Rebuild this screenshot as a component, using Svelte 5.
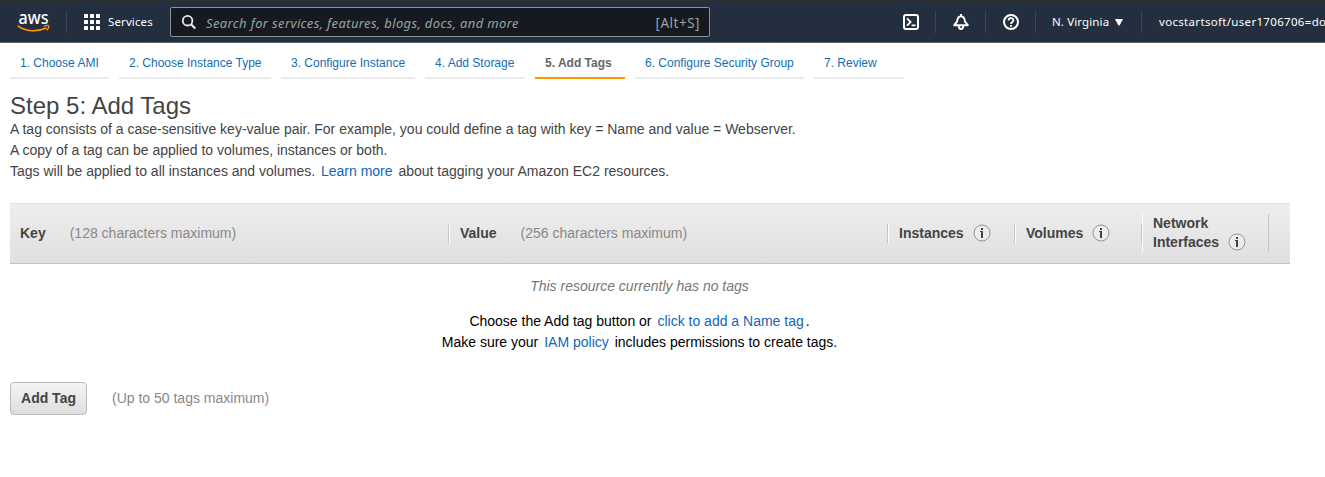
<script>
  const steps = [
    { label: '1. Choose AMI', width: 99 },
    { label: '2. Choose Instance Type', width: 152 },
    { label: '3. Configure Instance', width: 134 },
    { label: '4. Add Storage', width: 100 },
    { label: '5. Add Tags', width: 90, active: true },
    { label: '6. Configure Security Group', width: 169 },
    { label: '7. Review', width: 90 }
  ];
  const dots = [0, 6, 12];
</script>

{#snippet info()}
  <svg class="info" width="18" height="18" viewBox="0 0 18 18" aria-hidden="true">
    <circle cx="9" cy="9" r="8" fill="#ececec" stroke="#949494" />
    <path d="M8 4h2v2H8zM7 7h3v7H8V8H7z" fill="#444" />
  </svg>
{/snippet}

<header>
  <div class="logo">
    <svg width="34" height="24" viewBox="0 0 34 24">
      <text x="1.500" y="12.500" textLength="30" lengthAdjust="spacingAndGlyphs">aws</text>
      <path d="M1.200 15.200C9 20.800 20 21.200 29 17" fill="none" stroke="#f90" stroke-width="1.600" stroke-linecap="round" />
      <path d="M27 15.200c2-.8 4-.9 4.600-.4.4.7-.4 3-1.600 4.300" fill="none" stroke="#f90" stroke-width="1.200" stroke-linecap="round" />
    </svg>
  </div>
  <div class="services">
    <svg width="16" height="16" viewBox="0 0 16 16" fill="#fff">
      {#each dots as y}
        {#each dots as x}
          <rect {x} {y} width="4" height="4" rx=".6" />
        {/each}
      {/each}
    </svg>
    <span>Services</span>
  </div>
  <div class="search">
    <svg width="16" height="16" viewBox="0 0 16 16" fill="none" stroke="#eaeded" stroke-width="1.8">
      <circle cx="6.6" cy="6.7" r="4.8" />
      <path d="M10 10.200l4.3 4.3" stroke-width="2.1" />
    </svg>
    <em>Search for services, features, blogs, docs, and more</em>
    <kbd>[Alt+S]</kbd>
  </div>
  <div class="tool">
    <svg width="16" height="16" viewBox="0 0 16 16" fill="none" stroke="#fff" stroke-width="2">
      <rect x="1" y="1" width="14" height="14" rx="2" />
      <path d="M4 4.3L7.6 8 4 11.7M8.6 11.3h4" stroke-width="1.8" />
    </svg>
  </div>
  <div class="tool">
    <svg width="16" height="16" viewBox="0 0 16 16" fill="none" stroke="#fff" stroke-width="1.9" stroke-linejoin="round">
      <path d="M8 0v2M1.2 11.2h13.6L12 7.6C11.6 4.5 10.5 2.2 8 2.2S4.4 4.5 4 7.6z" />
      <path d="M5.8 12c0 4 4.4 4 4.4 0" />
    </svg>
  </div>
  <div class="tool">
    <svg width="16" height="16" viewBox="0 0 16 16" fill="none" stroke="#fff" stroke-width="2">
      <circle cx="8" cy="8" r="7" />
      <path d="M5.6 6.5c0-3 4.8-3 4.8-.2C10.4 8 8 7.9 8 10" stroke-width="1.8" />
      <path d="M8 10.900v1.900" />
    </svg>
  </div>
  <div class="region">
    <span>N. Virginia</span>
    <svg width="8" height="7" viewBox="0 0 8 7"><path d="M0 0h8L4.6 6.500h-1.200z" fill="#fff" /></svg>
  </div>
  <div class="account">vocstartsoft/user1706706=do</div>
</header>

<nav>
  {#each steps as step}
    <a class:active={step.active} style:width="{step.width}px">{step.label}</a>
  {/each}
</nav>

<main>
  <h1>Step 5: Add Tags</h1>
  <p>A tag consists of a case-sensitive key-value pair. For example, you could define a tag with key = Name and value = Webserver.</p>
  <p>A copy of a tag can be applied to volumes, instances or both.</p>
  <p>Tags will be applied to all instances and volumes. <a class="link">Learn more</a> about tagging your Amazon EC2 resources.</p>

  <div class="thead">
    <div class="cell first"><b>Key</b><span>(128 characters maximum)</span></div>
    <div class="cell wide"><b>Value</b><span>(256 characters maximum)</span></div>
    <div class="cell"><b>Instances</b>{@render info()}</div>
    <div class="cell"><b>Volumes</b>{@render info()}</div>
    <div class="cell two">
      <b>Network</b>
      <div class="line"><b>Interfaces</b>{@render info()}</div>
    </div>
  </div>

  <div class="empty">
    <em>This resource currently has no tags</em>
    <div>Choose the Add tag button or <a class="link">click to add a Name tag</a>.</div>
    <div>Make sure your <a class="link">IAM policy</a> includes permissions to create tags.</div>
  </div>

  <div class="actions">
    <button>Add Tag</button>
    <span>(Up to 50 tags maximum)</span>
  </div>
</main>

<style>
  :global(body) {
    background: #fff;
    overflow: hidden;
  }
  :global(#app) {
    font-family: 'Liberation Sans', Arial, sans-serif;
  }
  header {
    box-sizing: border-box;
    height: 43px;
    display: flex;
    align-items: center;
    background: #232f3e;
    border-top: 2px solid #2f2f2f;
    border-bottom: 1px solid #5a6470;
    color: #fff;
    font: 11.5px 'Noto Sans', sans-serif;
    letter-spacing: 0.12px;
    white-space: nowrap;
    overflow: hidden;
  }
  header svg {
    display: block;
    flex: none;
    overflow: visible;
  }
  .logo {
    box-sizing: border-box;
    width: 67px;
    height: 22px;
    padding-left: 17px;
    border-right: 1px solid #3d4855;
    flex: none;
  }
  .logo text {
    font: 500 18.5px 'Noto Sans', sans-serif;
    letter-spacing: 0;
    fill: #fff;
  }
  .services {
    box-sizing: border-box;
    width: 103px;
    padding-left: 17px;
    display: flex;
    align-items: center;
    gap: 8px;
    flex: none;
  }
  .services span,
  .region span,
  .account {
    padding-bottom: 2px;
  }
  .search {
    box-sizing: border-box;
    width: 540px;
    height: 30px;
    border: 1px solid #879596;
    border-radius: 2px;
    background: #16191f;
    color: #95a5a6;
    display: flex;
    align-items: center;
    padding: 0 9px 0 10px;
    margin-right: 176px;
    font-size: 13px;
    flex: none;
  }
  .search em {
    margin-left: 9px;
    padding-top: 1px;
    letter-spacing: 0.36px;
  }
  kbd {
    margin-left: auto;
    padding-top: 1px;
    font: inherit;
    font-size: 13.5px;
    letter-spacing: 0.5px;
  }
  .tool {
    box-sizing: border-box;
    width: 50px;
    height: 22px;
    padding-left: 17px;
    display: flex;
    align-items: center;
    border-right: 1px solid #3d4855;
    flex: none;
  }
  .region {
    box-sizing: border-box;
    width: 106px;
    height: 22px;
    display: flex;
    align-items: center;
    gap: 6px;
    padding-left: 16px;
    border-right: 1px solid #3d4855;
    flex: none;
  }
  .account {
    padding-left: 17px;
    letter-spacing: 0.32px;
  }
  nav {
    display: flex;
    gap: 10px;
    padding: 10px 10px 0;
    font-size: 12px;
  }
  nav a {
    box-sizing: border-box;
    height: 26px;
    padding-left: 10px;
    line-height: 20px;
    color: #146eb4;
    border-bottom: 2px solid #eaeaea;
    white-space: nowrap;
    flex: none;
  }
  nav a.active {
    color: #666;
    font-weight: bold;
    border-color: #f90;
  }
  main {
    padding: 13px 35px 0 10px;
    font-size: 14px;
    line-height: 21px;
    color: #444;
  }
  h1 {
    margin: 0;
    font-size: 24px;
    font-weight: normal;
    line-height: 27px;
  }
  p {
    margin: 0;
  }
  .link {
    color: #1166bb;
    padding: 0 2px;
  }
  .thead {
    box-sizing: border-box;
    height: 61px;
    margin-top: 21px;
    padding-bottom: 1px;
    display: flex;
    align-items: center;
    background: linear-gradient(#eee, #dfdfdf);
    border-top: 1px solid #e0e0e0;
    border-bottom: 1px solid #c4c4c4;
    line-height: 19px;
  }
  .cell {
    box-sizing: border-box;
    width: 127px;
    height: 19px;
    display: flex;
    align-items: center;
    padding-left: 10px;
    border-left: 1px solid #fff;
    border-right: 1px solid #c4c4c4;
  }
  .cell.first {
    width: 439px;
    border-left: 0;
  }
  .cell.wide {
    width: 439px;
  }
  .cell.two {
    height: 38px;
    display: block;
  }
  .cell.two > b {
    display: block;
  }
  .cell span {
    margin-left: 24px;
    color: #888;
  }
  .line {
    display: flex;
    align-items: flex-start;
  }
  .info {
    display: block;
    margin-left: 9px;
  }
  .empty {
    padding-top: 12px;
    padding-right: 21px;
    text-align: center;
    color: #000;
  }
  .empty em {
    display: block;
    color: #777;
    margin-bottom: 14px;
  }
  .actions {
    display: flex;
    align-items: center;
    margin-top: 29px;
    gap: 25px;
    color: #888;
  }
  button {
    box-sizing: border-box;
    width: 77px;
    height: 33px;
    padding: 0 0 2px;
    border: 1px solid #bbb;
    border-radius: 4px;
    background: linear-gradient(#f4f4f4, #dedede);
    color: #444;
    font: bold 14px 'Liberation Sans', Arial, sans-serif;
  }
</style>
